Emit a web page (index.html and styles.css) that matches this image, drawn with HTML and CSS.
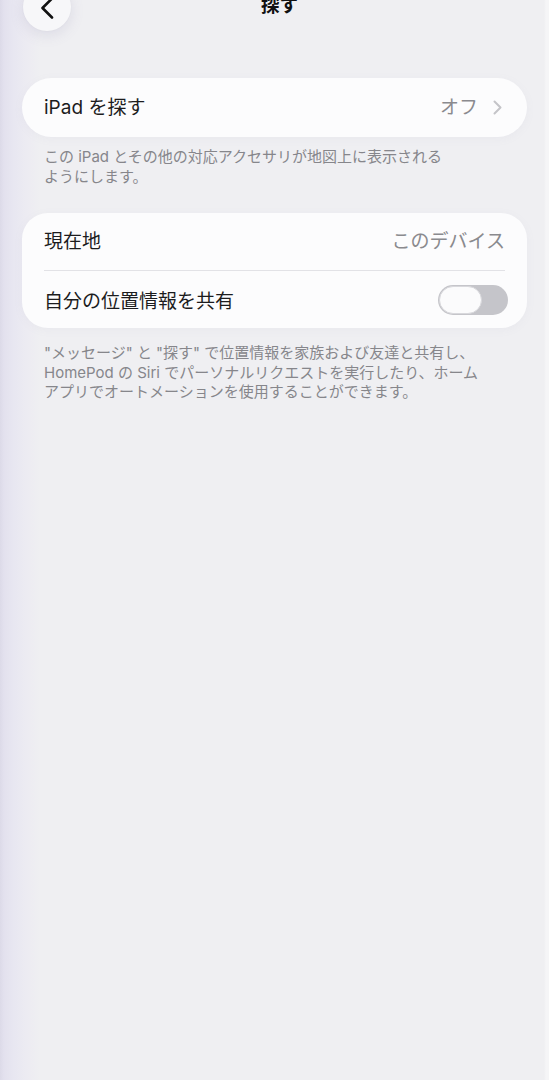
FILE: index.html
```html
<!DOCTYPE html>
<html lang="ja">
<head>
<meta charset="utf-8">
<link rel="stylesheet" href="styles.css">
</head>
<body>
<div class="page">
  <header class="nav">
    <div class="nav-left">
      <button class="back" aria-label="戻る">
        <svg width="18" height="22" viewBox="0 0 18 22"><path d="M14 1.5 L4.5 11 L14 20.5" fill="none" stroke="#111" stroke-width="2.6" stroke-linecap="round" stroke-linejoin="round"/></svg>
      </button>
    </div>
    <h1 class="title">探す</h1>
    <div class="nav-right"></div>
  </header>

  <section class="group first">
    <div class="card pill">
      <div class="row">
        <span class="label">iPad を探す</span>
        <span class="value">オフ
          <svg class="chev" width="9" height="15" viewBox="0 0 9 15"><path d="M1.5 1.5 L7.5 7.5 L1.5 13.5" fill="none" stroke="#c4c4c8" stroke-width="2" stroke-linecap="round" stroke-linejoin="round"/></svg>
        </span>
      </div>
    </div>
    <p class="note">この iPad とその他の対応アクセサリが地図上に表示される<br>ようにします。</p>
  </section>

  <section class="group second">
    <div class="card">
      <div class="row">
        <span class="label">現在地</span>
        <span class="value">このデバイス</span>
      </div>
      <div class="sep"></div>
      <div class="row lower">
        <span class="label">自分の位置情報を共有</span>
        <span class="toggle"><span class="knob"></span></span>
      </div>
    </div>
    <p class="note note-long">"メッセージ" と "探す" で位置情報を家族および友達と共有し、<br>HomePod の Siri でパーソナルリクエストを実行したり、ホーム<br>アプリでオートメーションを使用することができます。</p>
  </section>
</div>
</body>
</html>
```

FILE: styles.css
```css
* { box-sizing: border-box; }
html, body { margin: 0; padding: 0; }
body {
  width: 549px;
  height: 1080px;
  overflow: hidden;
  font-family: "Inter", "Noto Sans CJK JP", sans-serif;
  color: #1c1c1e;
  background:
    linear-gradient(to right, #dcdae8 0px, #e3e1ee 4px, #e8e7f1 14px, #ecebf2 26px, #efeff2 40px, #efeff2 544px, #f5f5f7 546px, #f5f5f7 549px);
}
.page {
  padding: 0 22px;
}
.nav {
  display: grid;
  grid-template-columns: 1fr auto 1fr;
  align-items: center;
  height: 48px;
  margin-top: -17px;
}
.back {
  width: 48px;
  height: 48px;
  margin-left: 1px;
  border-radius: 50%;
  border: none;
  padding: 0;
  background: #f7f7f9;
  box-shadow: 0 4px 14px rgba(120, 115, 160, 0.16), 0 0 2px rgba(0,0,0,0.04);
  display: flex;
  align-items: center;
  justify-content: center;
  padding-top: 1px;
}
.title {
  margin: 0 0 4px 10px;
  font-size: 18.5px;
  font-weight: 700;
  line-height: 22px;
  color: #111;
}
.group.first {
  margin-top: 47px;
}
.group.second {
  margin-top: 26px;
}
.card {
  background: #fcfcfd;
  border-radius: 26px;
  padding: 0 22px;
  box-shadow: 0 2px 10px rgba(140, 140, 170, 0.06);
}
.card.pill {
  border-radius: 30px;
}
.row {
  display: flex;
  align-items: center;
  justify-content: space-between;
  height: 57px;
}
.card.pill .row { height: 59px; }
.row.lower { padding-top: 4px; }
.label {
  font-size: 19px;
  line-height: 24px;
  color: #1c1c1e;
}
.value {
  display: flex;
  align-items: center;
  gap: 15px;
  font-size: 19px;
  line-height: 24px;
  color: #8a8a8e;
}
.chev { margin-right: 3px; }
.sep {
  height: 1px;
  background: #e2e2e6;
}
.toggle {
  width: 70px;
  height: 30px;
  border-radius: 15px;
  background: #c5c5ca;
  margin-right: -3px;
  margin-top: -3px;
  display: flex;
  align-items: center;
  padding-left: 1px;
}
.knob {
  width: 43px;
  height: 28px;
  border-radius: 14px;
  background: #fbfbfc;
  border: 1.5px solid #d8d8dc;
}
.note {
  margin: 10px 0 0;
  padding: 0 22px;
  font-size: 15px;
  line-height: 20px;
  color: #86868b;
}
.note.note-long {
  margin-top: 15px;
  line-height: 19.5px;
}
```
